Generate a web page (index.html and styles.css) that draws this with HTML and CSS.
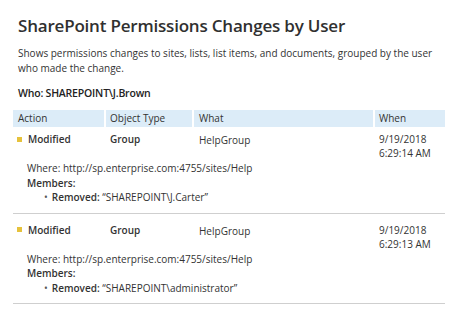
FILE: index.html
```html
<!DOCTYPE html>
<html lang="en">
<head>
    <meta charset="UTF-8">
    <meta name="viewport" content="width=device-width, initial-scale=1.0">
    <title>SharePoint Permissions Changes by User</title>
    <link rel="stylesheet" href="styles.css">
</head>
<body>
    <div class="report">
        <h1 class="title">SharePoint Permissions Changes by User</h1>
        <p class="description">Shows permissions changes to sites, lists, list items, and documents, grouped by the user who made the change.</p>
        <h2 class="who">Who: SHAREPOINT\J.Brown</h2>

        <div class="table">
            <div class="header-row">
                <div class="cell">Action</div>
                <div class="cell">Object Type</div>
                <div class="cell">What</div>
                <div class="cell">When</div>
            </div>

            <div class="row">
                <div class="main">
                    <div class="cell action"><span class="marker"></span>Modified</div>
                    <div class="cell type">Group</div>
                    <div class="cell what">HelpGroup</div>
                    <div class="cell when">9/19/2018<br>6:29:14 AM</div>
                </div>
                <div class="details">
                    <div>Where: http://sp.enterprise.com:4755/sites/Help</div>
                    <div><b>Members:</b></div>
                    <ul class="members">
                        <li><b>Removed:</b> “SHAREPOINT\J.Carter”</li>
                    </ul>
                </div>
            </div>

            <div class="row">
                <div class="main">
                    <div class="cell action"><span class="marker"></span>Modified</div>
                    <div class="cell type">Group</div>
                    <div class="cell what">HelpGroup</div>
                    <div class="cell when">9/19/2018<br>6:29:13 AM</div>
                </div>
                <div class="details">
                    <div>Where: http://sp.enterprise.com:4755/sites/Help</div>
                    <div><b>Members:</b></div>
                    <ul class="members">
                        <li><b>Removed:</b> “SHAREPOINT\administrator”</li>
                    </ul>
                </div>
            </div>
        </div>
    </div>
</body>
</html>
```

FILE: styles.css
```css
* {
    margin: 0;
    padding: 0;
    box-sizing: border-box;
}

body {
    background: white;
    font-family: "Open Sans", "DejaVu Sans", sans-serif;
    color: #333;
}

.report {
    padding: 14px 10px 0 13px;
}

.title {
    padding-left: 5px;
    font-size: 17px;
    line-height: 24px;
    font-weight: 600;
    letter-spacing: -0.2px;
    color: #303030;
}

.description {
    padding-left: 5px;
    margin-top: 8px;
    font-size: 10px;
    line-height: 15px;
    color: #333;
}

.who {
    padding-left: 5px;
    margin-top: 10px;
    font-size: 10.5px;
    line-height: 15px;
    font-weight: 600;
    letter-spacing: -0.2px;
    color: #222;
}

.table {
    margin-top: 9px;
    width: 432px;
    font-size: 10px;
}

.header-row,
.main {
    display: grid;
    grid-template-columns: 91px 86px 179px 70px;
    column-gap: 2px;
}

.header-row .cell {
    background: #dcecf8;
    height: 17px;
    line-height: 17px;
    padding-left: 5px;
    color: #333;
}

.header-row .cell:nth-child(2),
.header-row .cell:nth-child(4) {
    padding-left: 4px;
}

.row {
    padding: 9px 0 8px;
    border-bottom: 1px solid #cfcfcf;
}

.header-row + .row {
    padding-top: 5px;
}

.main .cell {
    line-height: 14px;
    padding-left: 5px;
}

.main .type,
.main .when {
    padding-left: 4px;
}

.action {
    display: flex;
    align-items: center;
    align-self: start;
    gap: 6px;
    font-weight: 600;
    padding-left: 4px !important;
}

.marker {
    width: 5px;
    height: 5px;
    background: #e6c23c;
}

.type {
    font-weight: 600;
}

.what {
    padding-top: 1px;
}

.details {
    margin-top: 1px;
    padding-left: 14px;
    line-height: 14.5px;
}

.details b {
    font-weight: 600;
}

.members {
    list-style: none;
    padding-left: 17px;
}

.members li::before {
    content: "•";
    margin-right: 4px;
    color: #555;
}
```
